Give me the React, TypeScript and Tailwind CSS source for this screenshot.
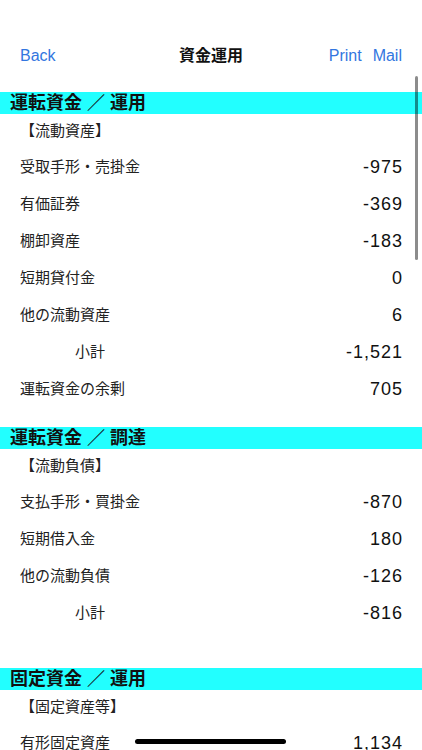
import React from "react";

type Row = { label: string; value?: string; indent?: boolean };

type Section = {
  title: string;
  sub: string;
  rows: Row[];
  gapAfter: number;
};

const SECTIONS: Section[] = [
  {
    title: "運転資金 ／ 運用",
    sub: "【流動資産】",
    rows: [
      { label: "受取手形・売掛金", value: "-975" },
      { label: "有価証券", value: "-369" },
      { label: "棚卸資産", value: "-183" },
      { label: "短期貸付金", value: "0" },
      { label: "他の流動資産", value: "6" },
      { label: "小計", value: "-1,521", indent: true },
      { label: "運転資金の余剰", value: "705" },
    ],
    gapAfter: 19,
  },
  {
    title: "運転資金 ／ 調達",
    sub: "【流動負債】",
    rows: [
      { label: "支払手形・買掛金", value: "-870" },
      { label: "短期借入金", value: "180" },
      { label: "他の流動負債", value: "-126" },
      { label: "小計", value: "-816", indent: true },
    ],
    gapAfter: 36,
  },
  {
    title: "固定資金 ／ 運用",
    sub: "【固定資産等】",
    rows: [{ label: "有形固定資産", value: "1,134" }],
    gapAfter: 0,
  },
];

const FONT = "font-['Liberation_Sans','Noto_Sans_CJK_JP',sans-serif]";

export default function App() {
  return (
    <div className={`relative h-[750px] w-[422px] overflow-hidden bg-white ${FONT}`}>
      {/* Nav bar */}
      <div className="h-[92px] pt-[38px]">
        <div className="flex h-[36px] items-center justify-between px-5 text-[16px]">
          <span className="w-[90px] text-[#3276e0]">Back</span>
          <span className="text-[16px] font-bold text-[#111]">資金運用</span>
          <div className="flex w-[90px] justify-end gap-[11px] text-[#3276e0]">
            <span>Print</span>
            <span>Mail</span>
          </div>
        </div>
      </div>

      {SECTIONS.map((s) => (
        <div key={s.title}>
          <div className="flex h-[22px] items-center bg-[#22ffff] pl-[10px] text-[18px] font-bold text-[#111]">
            {s.title}
          </div>
          <div className="flex h-[35px] items-center pl-5 text-[15px] text-[#222]">{s.sub}</div>
          {s.rows.map((r, i) => (
            <div key={i} className="flex h-[37px] items-center justify-between pr-[19px]">
              <span className={`text-[15px] text-[#222] ${r.indent ? "pl-[75px]" : "pl-5"}`}>{r.label}</span>
              <span className="text-[18px] tracking-[1px] text-[#111]">{r.value}</span>
            </div>
          ))}
          {s.gapAfter > 0 && <div style={{ height: s.gapAfter }} />}
        </div>
      ))}

      {/* Scroll indicator */}
      <div className="absolute left-[415px] top-[76px] h-[184px] w-[3px] rounded-full bg-black/45" />

      {/* Home indicator */}
      <div className="absolute bottom-[6px] left-[135px] h-[5px] w-[151px] rounded-full bg-black" />
    </div>
  );
}
